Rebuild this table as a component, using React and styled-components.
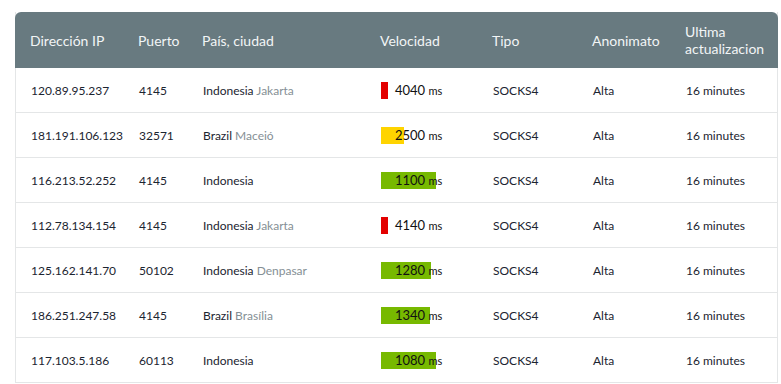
import React from "react";
import styled, { createGlobalStyle } from "styled-components";

const GlobalStyle = createGlobalStyle`
  body {
    margin: 0;
    background: #ffffff;
    font-family: Lato, "Open Sans", sans-serif;
  }
`;

const Page = styled.div`
  padding: 12px 5px 0 15px;
`;

const Table = styled.div`
  width: 761px;
  border-right: 1px solid #e4e6e7;
  border-left: 1px solid #e4e6e7;
`;

const cols = "108px 64px 178px 112px 100px 93px 1fr";

const HeadRow = styled.div`
  display: grid;
  grid-template-columns: ${cols};
  height: 56px;
  background: #687a80;
  border-radius: 6px 6px 0 0;
  margin: 0 -1px;
  align-items: center;
`;

const HeadCell = styled.div`
  padding-left: 15px;
  color: #f2f5f6;
  font-size: 14px;
  line-height: 17px;
`;

const Row = styled.div`
  display: grid;
  grid-template-columns: ${cols};
  height: 44px;
  border-bottom: 1px solid #e4e6e7;
  align-items: center;
`;

const Cell = styled.div`
  padding-left: 15px;
  color: #1b2430;
  font-size: 12px;
  white-space: nowrap;
`;

const City = styled.span`
  color: #858f95;
`;

const Speed = styled.div`
  position: relative;
  height: 17px;
  display: flex;
  align-items: center;
`;

const Bar = styled.div`
  position: absolute;
  left: 0;
  top: 0;
  height: 17px;
  background: ${(p) => p.$color};
`;

const SpeedText = styled.span`
  position: relative;
  padding-left: 14px;
  font-size: 13px;
  color: #111;
`;

const Unit = styled.span`
  font-size: 11px;
`;

const colors = { red: "#e30000", yellow: "#ffd400", green: "#77b900" };

const rows = [
  { ip: "120.89.95.237", port: "4145", country: "Indonesia", city: "Jakarta", ms: 4040, bar: 7, color: "red" },
  { ip: "181.191.106.123", port: "32571", country: "Brazil", city: "Maceió", ms: 2500, bar: 23, color: "yellow" },
  { ip: "116.213.52.252", port: "4145", country: "Indonesia", city: "", ms: 1100, bar: 55, color: "green" },
  { ip: "112.78.134.154", port: "4145", country: "Indonesia", city: "Jakarta", ms: 4140, bar: 7, color: "red" },
  { ip: "125.162.141.70", port: "50102", country: "Indonesia", city: "Denpasar", ms: 1280, bar: 50, color: "green" },
  { ip: "186.251.247.58", port: "4145", country: "Brazil", city: "Brasília", ms: 1340, bar: 49, color: "green" },
  { ip: "117.103.5.186", port: "60113", country: "Indonesia", city: "", ms: 1080, bar: 55, color: "green" },
];

export default function App() {
  return (
    <>
      <GlobalStyle />
      <Page>
        <Table>
          <HeadRow>
            <HeadCell>Dirección IP</HeadCell>
            <HeadCell>Puerto</HeadCell>
            <HeadCell>País, ciudad</HeadCell>
            <HeadCell>Velocidad</HeadCell>
            <HeadCell>Tipo</HeadCell>
            <HeadCell>Anonimato</HeadCell>
            <HeadCell>
              Ultima
              <br />
              actualizacion
            </HeadCell>
          </HeadRow>
          {rows.map((r) => (
            <Row key={r.ip}>
              <Cell>{r.ip}</Cell>
              <Cell>{r.port}</Cell>
              <Cell>
                {r.country} {r.city && <City>{r.city}</City>}
              </Cell>
              <Cell>
                <Speed>
                  <Bar $color={colors[r.color]} style={{ width: r.bar }} />
                  <SpeedText>
                    {r.ms} <Unit>ms</Unit>
                  </SpeedText>
                </Speed>
              </Cell>
              <Cell>SOCKS4</Cell>
              <Cell>Alta</Cell>
              <Cell>16 minutes</Cell>
            </Row>
          ))}
        </Table>
      </Page>
    </>
  );
}
